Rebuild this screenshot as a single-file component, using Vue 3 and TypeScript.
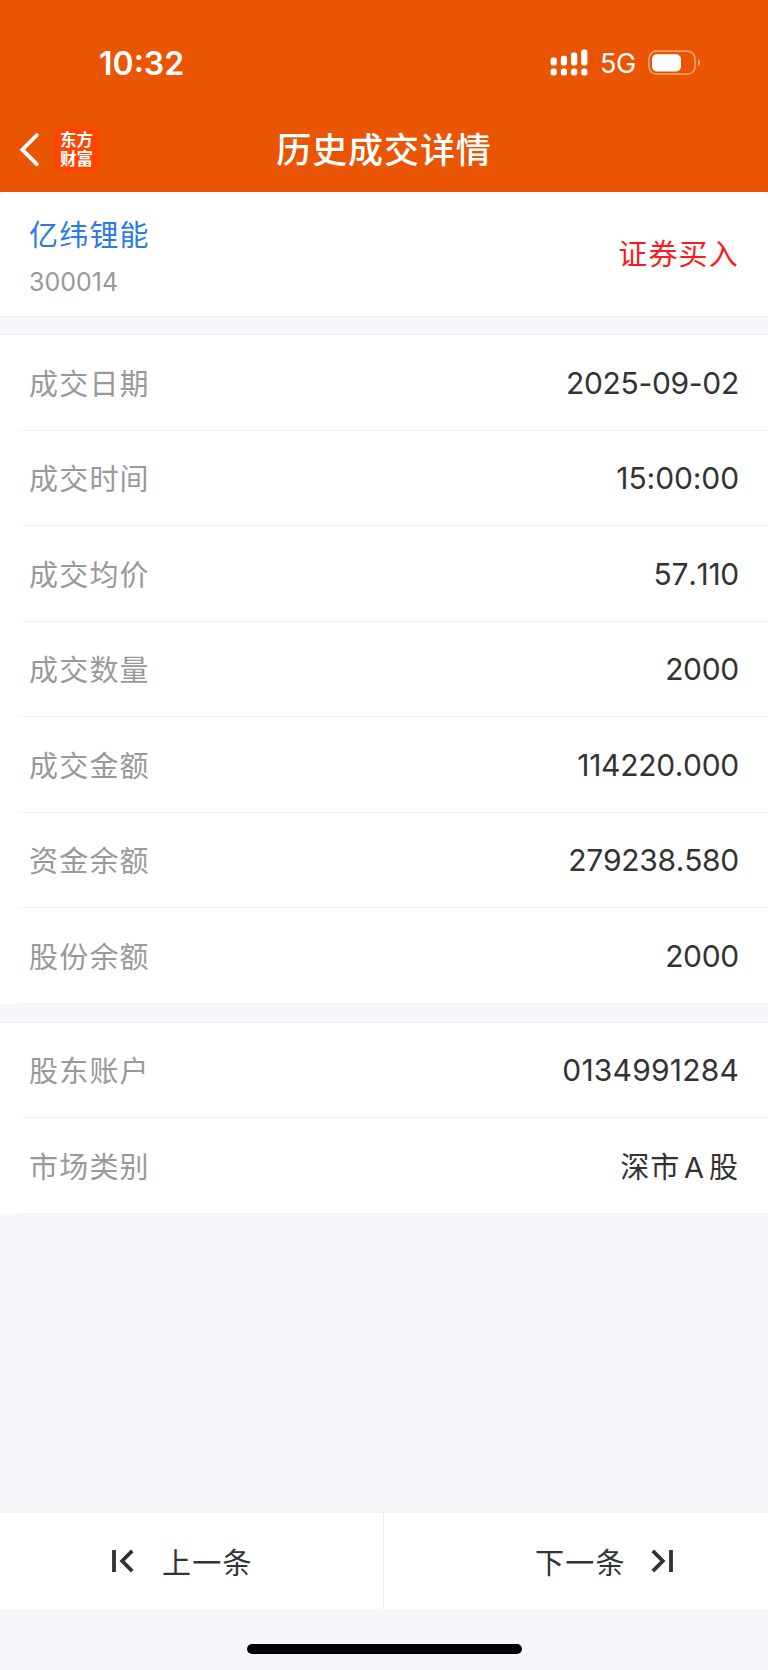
<script setup lang="ts">
interface Row {
  label: string
  value: string
  kind?: string
}

const tradeRows: Row[] = [
  { label: '成交日期', value: '2025-09-02' },
  { label: '成交时间', value: '15:00:00', kind: 'time' },
  { label: '成交均价', value: '57.110' },
  { label: '成交数量', value: '2000' },
  { label: '成交金额', value: '114220.000' },
  { label: '资金余额', value: '279238.580' },
  { label: '股份余额', value: '2000' },
]

const accountRows: Row[] = [
  { label: '股东账户', value: '0134991284', kind: 'account' },
  { label: '市场类别', value: '深市 A 股', kind: 'han' },
]

const groups: Row[][] = [tradeRows, accountRows]

const bars = [
  { x: 0, h: 8 },
  { x: 10.2, h: 9.7 },
  { x: 20.4, h: 13 },
  { x: 30.6, h: 16 },
]
</script>

<template>
  <div class="page">
    <header class="header">
      <div class="status">
        <span class="clock">10:32</span>
        <div class="indicators">
          <svg class="signal" width="38" height="28" viewBox="0 0 38 28">
            <g v-for="bar in bars" :key="bar.x" fill="#fff">
              <rect :x="bar.x + 0.6" :y="16.5 - bar.h" width="6.2" :height="bar.h" rx="2.2" />
              <rect :x="bar.x + 0.6" y="19.5" width="6.2" height="7" rx="2.5" />
            </g>
          </svg>
          <span class="network">5G</span>
          <svg class="battery" width="53" height="26" viewBox="0 0 53 26">
            <rect x="1" y="1.2" width="46" height="23" rx="7.5" fill="none" stroke="#fff" stroke-opacity=".42" stroke-width="1.7" />
            <rect x="4" y="4.2" width="29" height="17.2" rx="5" fill="#fff" />
            <path d="M50 9.3c2.7 1.2 2.7 5.8 0 7z" fill="#fff" fill-opacity=".48" />
          </svg>
        </div>
      </div>
      <div class="nav">
        <div class="nav-left">
          <svg class="back" width="21" height="36" viewBox="0 0 21 36">
            <path d="M17.8 3.2 3.3 17.7l14.5 14.5" fill="none" stroke="#fff" stroke-width="3.8" stroke-linecap="round" />
          </svg>
          <div class="logo">东方财富</div>
        </div>
        <h1 class="title">历史成交详情</h1>
      </div>
    </header>

    <section class="stock">
      <div class="stock-id">
        <span class="stock-name">亿纬锂能</span>
        <span class="stock-code">300014</span>
      </div>
      <span class="side">证券买入</span>
    </section>

    <section v-for="(rows, i) in groups" :key="i" class="group">
      <div v-for="row in rows" :key="row.label" class="row">
        <span class="label">{{ row.label }}</span>
        <span class="value" :class="row.kind">{{ row.value }}</span>
      </div>
    </section>

    <footer class="footer">
      <nav class="pager">
        <button class="pager-btn prev">
          <svg width="22" height="24" viewBox="0 0 22 24" fill="none" stroke="#333" stroke-width="3.8">
            <path d="M2 1v22M20.2 1.8 10.2 12l10 10.2" />
          </svg>
          <span>上一条</span>
        </button>
        <button class="pager-btn next">
          <span>下一条</span>
          <svg width="22" height="24" viewBox="0 0 22 24" fill="none" stroke="#333" stroke-width="3.8">
            <path d="M20 1v22M1.8 1.8 11.8 12l-10 10.2" />
          </svg>
        </button>
      </nav>
      <div class="home"></div>
    </footer>
  </div>
</template>

<style>
body {
  margin: 0;
  background: #f6f7fa;
}
</style>

<style scoped>
.page {
  box-sizing: border-box;
  width: 768px;
  height: 1670px;
  display: flex;
  flex-direction: column;
  background: #f6f7fa;
  font-family: Inter, "Noto Sans CJK SC", sans-serif;
  color: #333;
  overflow: hidden;
}
.header {
  height: 192px;
  flex: none;
  background: #ea5504;
  color: #fff;
}
.status {
  height: 108px;
  box-sizing: border-box;
  padding: 42px 67px 0 99px;
  display: flex;
  justify-content: space-between;
}
.clock {
  font-size: 32px;
  line-height: 42px;
  font-weight: 600;
  padding-top: 1px;
}
.indicators {
  display: flex;
  height: 42px;
  align-items: center;
}
.signal {
  margin-top: -1px;
  margin-left: -1px;
}
.network {
  font-size: 27px;
  margin-left: 12px;
  width: 48px;
  line-height: 42px;
  padding-top: 2px;
  letter-spacing: -0.3px;
}
.battery {
  margin-top: -1px;
}
.nav {
  height: 84px;
  display: grid;
  grid-template-columns: 120px 1fr 120px;
  align-items: center;
}
.nav-left {
  display: flex;
  align-items: center;
  padding-left: 19px;
}
.logo {
  box-sizing: border-box;
  width: 45px;
  height: 45px;
  margin-left: 14px;
  margin-top: -1px;
  padding: 3px 5px 0 6px;
  border-radius: 9px;
  background: #ff4400;
  font: 700 16.5px/19px "Noto Sans CJK SC", sans-serif;
  word-break: break-all;
}
.title {
  margin: -1px 0 0;
  text-align: center;
  font-size: 35px;
  line-height: 50px;
  font-weight: 500;
  letter-spacing: 0.9px;
}
.stock {
  height: 125px;
  flex: none;
  box-sizing: border-box;
  padding: 0 29px;
  display: flex;
  justify-content: space-between;
  align-items: center;
  background: #fff;
  border-bottom: 1px solid #eeeff1;
  border-radius: 7px 7px 0 0;
}
.stock-id {
  display: flex;
  flex-direction: column;
  padding-top: 10px;
}
.stock-name {
  font-size: 29px;
  line-height: 44px;
  letter-spacing: 1.2px;
  color: #2c7be5;
}
.stock-code {
  margin-top: 2px;
  font-size: 25px;
  line-height: 44px;
  color: #999;
}
.side {
  font-size: 29px;
  letter-spacing: 1.2px;
  margin-top: -4px;
  color: #fc1a1e;
}
.group {
  flex: none;
  margin-top: 17px;
  background: #fff;
  border-top: 1px solid #ebebed;
}
.group + .group {
  margin-top: 18px;
}
.row {
  height: 95.5px;
  box-sizing: border-box;
  margin-left: 19px;
  padding: 0 29px 0 10px;
  border-bottom: 1px solid #f2f2f4;
  display: flex;
  justify-content: space-between;
  align-items: center;
}
.label {
  font-size: 29px;
  letter-spacing: 1.2px;
  margin-top: -1px;
  color: #999;
}
.value {
  font-size: 30px;
  font-kerning: none;
  letter-spacing: -0.3px;
  margin-top: 1px;
}
.value.time {
  letter-spacing: -0.1px;
}
.value.account {
  letter-spacing: 0.2px;
}
.value.han {
  font-size: 29px;
  letter-spacing: 0.9px;
  word-spacing: -5px;
  margin-top: -1px;
}
.footer {
  margin-top: auto;
  height: 158px;
  flex: none;
}
.pager {
  height: 97px;
  box-sizing: border-box;
  display: grid;
  grid-template-columns: 384px 384px;
  border-top: 1px solid #eeeff0;
  background: #fff;
}
.pager-btn {
  display: flex;
  align-items: center;
  border: 0;
  padding: 0;
  background: none;
  font: inherit;
  font-size: 29px;
  letter-spacing: 1.2px;
  color: #333;
}
.pager-btn span {
  margin-top: -1px;
}
.prev {
  padding-left: 112px;
  gap: 28px;
  border-right: 1px solid #ebecee;
}
.next {
  padding-left: 151px;
  gap: 25px;
}
.home {
  width: 275px;
  height: 10px;
  margin: 35px auto 0;
  border-radius: 5px;
  background: #000;
}
</style>
